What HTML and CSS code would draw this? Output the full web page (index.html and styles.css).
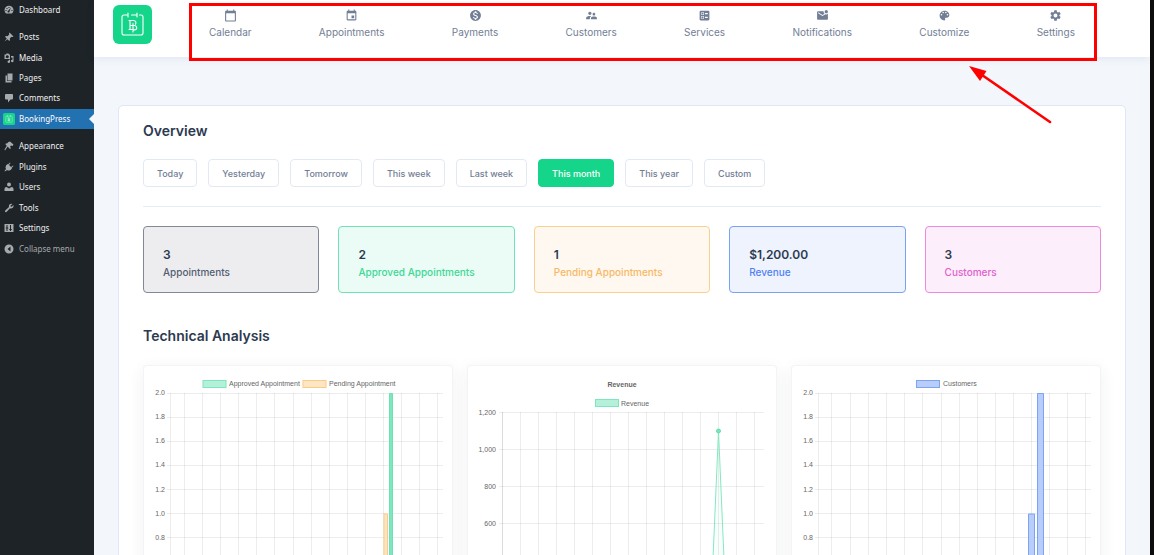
FILE: index.html
```html
<!DOCTYPE html>
<html lang="en">
<head>
<meta charset="utf-8">
<title>BookingPress Dashboard</title>
<link rel="stylesheet" href="styles.css">
</head>
<body>
<svg class="defs" aria-hidden="true">
  <symbol id="mark" viewBox="0 0 39 39">
    <rect width="39" height="39" rx="6" fill="#15d58a"/>
    <g fill="none" stroke="#fff" stroke-width="1.100" stroke-linecap="round" stroke-linejoin="round">
      <path d="M14 10H11q-2 0-2 2v16q0 2 2 2h17q2 0 2-2V12q0-2-2-2h-1.500M15 8v4M18.500 10H24M24 8v4"/>
      <path d="M16 15.500h4.500a2.400 2.400 0 0 1 2 3.800M17 15.500v9M16 24.500h3M17 20.500h4.500a2.200 2.200 0 1 1 0 4.400H20M20 18.500v8.500"/>
    </g>
  </symbol>
</svg>
<div class="app">
  <aside class="sidebar">
    <ul class="menu menu-top">
      <li><a class="menu-link" href="#"><svg class="menu-icon" viewBox="0 0 20 20"><path fill-rule="evenodd" d="M4 17a9 9 0 1 1 12 0zM9 4v2h2V4zM5 6v2h2V6zM3 10v2h2v-2zM15 10v2h2v-2zM14 5l-5 6a2 2 0 1 0 2 1.500z"/></svg>Dashboard</a></li>
    </ul>
    <ul class="menu menu-content">
      <li><a class="menu-link" href="#"><svg class="menu-icon" viewBox="0 0 20 20"><path d="M11 1l8 8-2 1-2-.500-3.500 3.500.500 3-1.500 2L7 14.500 1 19l4.500-6L2 9.500 4 8l3 .500L10.500 5 10 3z"/></svg>Posts</a></li>
      <li><a class="menu-link" href="#"><svg class="menu-icon" viewBox="0 0 20 20"><path fill-rule="evenodd" d="M1 3h3l1-2h4l1 2h2v9H1zM6.500 4.500a3 3 0 1 0 .1 0zM14 6h5v10a2.500 2.500 0 1 1-2-2.500V9h-3zM12 13.500V18a2.500 2.500 0 1 1-2-3v-1.500z"/></svg>Media</a></li>
      <li><a class="menu-link" href="#"><svg class="menu-icon" viewBox="0 0 20 20"><path d="M7 1h10v14H7zM3 5h3v11h9v3H3z"/></svg>Pages</a></li>
      <li><a class="menu-link" href="#"><svg class="menu-icon" viewBox="0 0 20 20"><path d="M4 2h12q2 0 2 2v7q0 2-2 2h-3l-5 6v-6H4q-2 0-2-2V4q0-2 2-2z"/></svg>Comments</a></li>
      <li><a class="menu-link menu-link-active" href="#" aria-current="page"><svg class="menu-icon"><use href="#mark"/></svg>BookingPress</a></li>
    </ul>
    <ul class="menu menu-admin">
      <li><a class="menu-link" href="#"><svg class="menu-icon" viewBox="0 0 20 20"><path d="M9 2l3-1 7 6-2 3-3-1-3 4-3-3-6 9-1-2 5-8-1-3z"/><path d="M4 4l10 10-2 2L3 7z"/></svg>Appearance</a></li>
      <li><a class="menu-link" href="#"><svg class="menu-icon" viewBox="0 0 20 20"><path d="M12 1l1 1-3 4 4 4 4-3 1 1-4 4 1 1-3 3q-4 2-7 0l-4 3-1-1 3-4q-2-3 0-7l3-3 1 1z"/></svg>Plugins</a></li>
      <li><a class="menu-link" href="#"><svg class="menu-icon" viewBox="0 0 20 20"><circle cx="10" cy="5" r="4"/><path d="M1 18v-4q0-4 4-4l5 3 5-3q4 0 4 4v4z"/></svg>Users</a></li>
      <li><a class="menu-link" href="#"><svg class="menu-icon" viewBox="0 0 20 20"><path d="M17 2l-4 3 .500 2 2 .500L19 4q1 4-2 6-2 1.500-5 .500L5 18q-2 1-3-1-.500-1 .500-2L10 8Q9 5 11 3q2-2 6-1z"/></svg>Tools</a></li>
      <li><a class="menu-link" href="#"><svg class="menu-icon" viewBox="0 0 20 20"><path fill-rule="evenodd" d="M1 2h18v16H1zM5 4v5H3.500v2H5v5h2v-5h1.500V9H7V4zM12 4v8h-1.500v2H12v2h2v-2h1.500v-2H14V4z"/></svg>Settings</a></li>
      <li><button class="menu-link menu-collapse" type="button"><svg class="menu-icon" viewBox="0 0 20 20"><path fill-rule="evenodd" d="M10 1a9 9 0 1 1 0 18 9 9 0 1 1 0-18zM13 5l-6 5 6 5z"/></svg>Collapse menu</button></li>
    </ul>
  </aside>

  <div class="page">
    <header class="topbar">
      <a class="brand" href="#" aria-label="BookingPress"><svg class="brand-mark"><use href="#mark"/></svg></a>
      <nav class="nav">
        <a class="nav-link" href="#"><svg class="nav-icon" viewBox="0 0 24 24"><path d="M20 3h-1V1h-2v2H7V1H5v2H4c-1.100 0-2 .9-2 2v16c0 1.100.9 2 2 2h16c1.100 0 2-.9 2-2V5c0-1.100-.9-2-2-2zm0 18H4V8h16v13z"/></svg>Calendar</a>
        <a class="nav-link" href="#"><svg class="nav-icon" viewBox="0 0 24 24"><path d="M17 12h-5v5h5v-5zM16 1v2H8V1H6v2H5c-1.110 0-1.990.9-1.990 2L3 19c0 1.100.89 2 2 2h14c1.100 0 2-.9 2-2V5c0-1.100-.9-2-2-2h-1V1h-2zm3 18H5V8h14v11z"/></svg>Appointments</a>
        <a class="nav-link" href="#"><svg class="nav-icon" viewBox="0 0 24 24"><path d="M12 2C6.480 2 2 6.480 2 12s4.480 10 10 10 10-4.480 10-10S17.520 2 12 2zm1.410 16.090V20h-2.670v-1.930c-1.710-.36-3.160-1.460-3.270-3.400h1.960c.1 1.050.82 1.870 2.650 1.870 1.960 0 2.400-.98 2.400-1.590 0-.83-.44-1.610-2.670-2.140-2.480-.6-4.180-1.620-4.180-3.670 0-1.720 1.390-2.840 3.110-3.210V4h2.670v1.950c1.860.45 2.790 1.860 2.850 3.390H14.300c-.05-1.110-.64-1.870-2.220-1.870-1.500 0-2.400.68-2.400 1.640 0 .84.65 1.390 2.670 1.910s4.180 1.390 4.180 3.910c-.01 1.830-1.380 2.830-3.120 3.160z"/></svg>Payments</a>
        <a class="nav-link" href="#"><svg class="nav-icon" viewBox="0 0 24 24"><path d="M16.500 12c1.380 0 2.490-1.120 2.490-2.500S17.880 7 16.500 7C15.120 7 14 8.120 14 9.500s1.120 2.500 2.500 2.500zM9 11c1.660 0 2.990-1.340 2.990-3S10.660 5 9 5C7.340 5 6 6.340 6 8s1.340 3 3 3zm7.500 3c-1.830 0-5.500.92-5.500 2.750V19h11v-2.250c0-1.830-3.670-2.750-5.500-2.750zM9 13c-2.330 0-7 1.170-7 3.500V19h7v-2.250c0-.85.33-2.340 2.370-3.470C10.500 13.100 9.660 13 9 13z"/></svg>Customers</a>
        <a class="nav-link" href="#"><svg class="nav-icon" viewBox="0 0 24 24"><path fill-rule="evenodd" d="M13 9.500h5v-2h-5v2zm0 7h5v-2h-5v2zm6 4.500H5c-1.100 0-2-.9-2-2V5c0-1.100.9-2 2-2h14c1.100 0 2 .9 2 2v14c0 1.100-.9 2-2 2zM6 11h5V6H6v5zm1-4h3v3H7V7zM6 18h5v-5H6v5zm1-4h3v3H7v-3z"/></svg>Services</a>
        <a class="nav-link" href="#"><svg class="nav-icon" viewBox="0 0 24 24"><path d="M22 8.980V18c0 1.100-.9 2-2 2H4c-1.100 0-2-.9-2-2V6c0-1.100.9-2 2-2h10.100c-.06.32-.1.66-.1 1 0 1.480.65 2.790 1.670 3.710L12 11 4 6v2l8 5 5.300-3.320c.54.2 1.100.32 1.700.32 1.130 0 2.160-.39 3-1.020zM16 5c0 1.660 1.340 3 3 3s3-1.340 3-3-1.340-3-3-3-3 1.340-3 3z"/></svg>Notifications</a>
        <a class="nav-link" href="#"><svg class="nav-icon" viewBox="0 0 24 24"><path d="M12 3c-4.970 0-9 4.030-9 9s4.030 9 9 9c.83 0 1.500-.67 1.500-1.500 0-.39-.15-.74-.39-1.010-.23-.26-.38-.61-.38-.99 0-.83.67-1.500 1.500-1.500H16c2.760 0 5-2.240 5-5 0-4.420-4.030-8-9-8zm-5.500 9c-.83 0-1.500-.67-1.500-1.500S5.670 9 6.500 9 8 9.670 8 10.500 7.330 12 6.500 12zm3-4C8.670 8 8 7.330 8 6.500S8.670 5 9.500 5s1.500.67 1.500 1.500S10.330 8 9.500 8zm5 0c-.83 0-1.500-.67-1.500-1.500S13.670 5 14.500 5s1.500.67 1.500 1.500S15.330 8 14.500 8zm3 4c-.83 0-1.500-.67-1.500-1.500S16.670 9 17.500 9s1.500.67 1.500 1.500-.67 1.500-1.500 1.500z"/></svg>Customize</a>
        <a class="nav-link" href="#"><svg class="nav-icon" viewBox="0 0 24 24"><path d="M19.140 12.940c.04-.3.060-.61.060-.94 0-.32-.02-.64-.07-.94l2.030-1.580c.18-.14.23-.41.12-.61l-1.920-3.320c-.12-.22-.37-.29-.59-.22l-2.390.96c-.5-.38-1.030-.7-1.620-.94l-.36-2.540c-.04-.24-.24-.41-.48-.41h-3.840c-.24 0-.43.17-.47.41l-.36 2.540c-.59.24-1.130.57-1.620.94l-2.390-.96c-.22-.08-.47 0-.59.22L2.740 8.870c-.12.21-.08.47.12.61l2.030 1.580c-.05.3-.09.63-.09.94s.02.64.07.94l-2.030 1.580c-.18.14-.23.41-.12.61l1.920 3.320c.12.22.37.29.59.22l2.390-.96c.5.38 1.030.7 1.620.94l.36 2.540c.05.24.24.41.48.41h3.840c.24 0 .44-.17.47-.41l.36-2.540c.59-.24 1.130-.56 1.620-.94l2.390.96c.22.08.47 0 .59-.22l1.920-3.320c.12-.22.07-.47-.12-.61l-2.010-1.580zM12 15.600c-1.980 0-3.600-1.620-3.600-3.600s1.620-3.600 3.600-3.600 3.600 1.620 3.600 3.600-1.620 3.600-3.600 3.600z"/></svg>Settings</a>
        <svg class="arrow" viewBox="0 0 84 60" aria-hidden="true"><path d="M14 10L82 57" stroke="#f00" stroke-width="2.600" stroke-linecap="round"/><path d="M1 1l17.500 5-6.500 10z" fill="#f00"/></svg>
      </nav>
    </header>

    <main class="panel">
      <h2 class="title">Overview</h2>
      <div class="filters">
        <button class="filter" type="button">Today</button>
        <button class="filter" type="button">Yesterday</button>
        <button class="filter" type="button">Tomorrow</button>
        <button class="filter" type="button">This week</button>
        <button class="filter" type="button">Last week</button>
        <button class="filter filter-active" type="button" aria-pressed="true">This month</button>
        <button class="filter" type="button">This year</button>
        <button class="filter" type="button">Custom</button>
      </div>
      <section class="stats">
        <div class="stat stat-all"><strong class="stat-value">3</strong><span class="stat-label">Appointments</span></div>
        <div class="stat stat-approved"><strong class="stat-value">2</strong><span class="stat-label">Approved Appointments</span></div>
        <div class="stat stat-pending"><strong class="stat-value">1</strong><span class="stat-label">Pending Appointments</span></div>
        <div class="stat stat-revenue"><strong class="stat-value">$1,200.00</strong><span class="stat-label">Revenue</span></div>
        <div class="stat stat-customers"><strong class="stat-value">3</strong><span class="stat-label">Customers</span></div>
      </section>
      <h2 class="title">Technical Analysis</h2>
      <section class="charts">
        <div class="chart-card">
          <svg class="chart" viewBox="0 0 310 240" role="img" aria-label="Appointments chart">
            <rect class="green" x="60" y="15.500" width="23" height="7"/><text x="86" y="21">Approved Appointment</text>
            <rect class="orange" x="160" y="15.500" width="23" height="7"/><text x="186" y="21">Pending Appointment</text>
            <path class="grid" d="M24 28.500H300M24 52.500H300M24 76.500H300M24 100.500H300M24 124.500H300M24 148.500H300M24 172.500H300M24 197.500H300M24 221.500H300"/>
            <path class="grid" d="M27.500 28V240M41.500 28V240M59.500 28V240M77.500 28V240M95.500 28V240M113.500 28V240M131.500 28V240M150.500 28V240M168.500 28V240M186.500 28V240M204.500 28V240M222.500 28V240M240.500 28V240M258.500 28V240M276.500 28V240M294.500 28V240"/>
            <g class="scale"><text x="22" y="30">2.0</text><text x="22" y="54">1.8</text><text x="22" y="78">1.6</text><text x="22" y="102">1.4</text><text x="22" y="127">1.2</text><text x="22" y="151">1.0</text><text x="22" y="175">0.8</text></g>
            <path class="orange" d="M241 240V149h3.500V240"/>
            <path class="green strong" d="M246.500 240V28.500h3V240"/>
          </svg>
        </div>
        <div class="chart-card">
          <svg class="chart" viewBox="0 0 310 240" role="img" aria-label="Revenue chart">
            <text class="chart-title" x="155" y="22">Revenue</text>
            <rect class="green" x="128.500" y="34.500" width="23" height="7"/><text x="154" y="41">Revenue</text>
            <path class="grid" d="M32 47.500H297M32 84.500H297M32 121.500H297M32 158.500H297M32 195.500H297"/>
            <path class="grid" d="M35.500 47V240M53.500 47V240M71.500 47V240M89.500 47V240M107.500 47V240M125.500 47V240M143.500 47V240M161.500 47V240M179.500 47V240M197.500 47V240M215.500 47V240M233.500 47V240M251.500 47V240M269.500 47V240M287.500 47V240"/>
            <path class="grid" d="M35.500 47V240"/>
            <g class="scale"><text x="29" y="50">1,200</text><text x="29" y="87">1,000</text><text x="29" y="124">800</text><text x="29" y="161">600</text></g>
            <path class="line" d="M244 240L251.500 66L259 240"/>
            <circle class="dot" cx="251.500" cy="66" r="2"/>
          </svg>
        </div>
        <div class="chart-card">
          <svg class="chart" viewBox="0 0 310 240" role="img" aria-label="Customers chart">
            <rect class="blue" x="125.500" y="15.500" width="23" height="7"/><text x="152" y="21">Customers</text>
            <path class="grid" d="M24 28.500H300M24 52.500H300M24 76.500H300M24 100.500H300M24 124.500H300M24 148.500H300M24 172.500H300M24 197.500H300M24 221.500H300"/>
            <path class="grid" d="M27.500 28V240M40.500 28V240M59.500 28V240M77.500 28V240M95.500 28V240M113.500 28V240M131.500 28V240M150.500 28V240M168.500 28V240M186.500 28V240M204.500 28V240M222.500 28V240M240.500 28V240M258.500 28V240M276.500 28V240M294.500 28V240"/>
            <g class="scale"><text x="22" y="30">2.0</text><text x="22" y="54">1.8</text><text x="22" y="78">1.6</text><text x="22" y="102">1.4</text><text x="22" y="127">1.2</text><text x="22" y="151">1.0</text><text x="22" y="175">0.8</text></g>
            <path class="blue" d="M237.500 240V149h6V240M246.500 240V28.500h6V240"/>
          </svg>
        </div>
      </section>
    </main>
  </div>
</div>
</body>
</html>
```

FILE: styles.css
```css
* { box-sizing: border-box; }

body {
  margin: 0;
  height: 100vh;
  overflow: hidden;
  background: #0d0d0d;
  font-family: Inter, sans-serif;
  color: #2c3a50;
}

a { color: inherit; text-decoration: none; }
button { font: inherit; cursor: pointer; }
.defs { display: none; }

.app {
  display: flex;
  height: 100%;
  overflow: hidden;
  margin-right: 4px;
  background: #f3f7fc;
}

/* Sidebar */
.sidebar {
  flex: 0 0 94px;
  background: #1d2327;
  font: 8px/12px "Noto Sans", sans-serif;
  color: #f0f0f1;
}

.menu {
  display: flex;
  flex-direction: column;
  margin: 0 0 7px;
  padding: 0;
  list-style: none;
}
.menu li { flex: 1; display: flex; }
.menu-top { height: 20px; }
.menu-content { height: 102px; }
.menu-admin { height: 123px; }

.menu-link {
  position: relative;
  flex: 1;
  display: flex;
  align-items: center;
  gap: 4px;
  padding: 0 0 0 3px;
  white-space: nowrap;
}
.menu-icon { width: 12px; height: 12px; padding: 1px; fill: #a7aaad; }
.menu-link-active { background: #2271b1; color: #fff; }
.menu-link-active .menu-icon { padding: 0; }
.menu-link-active::after {
  content: "";
  position: absolute;
  right: 0;
  top: 50%;
  border: 5px solid transparent;
  border-left-width: 0;
  border-right-color: #f3f7fc;
  transform: translateY(-50%);
}
.menu-collapse { border: 0; background: none; color: #a7aaad; }

/* Top bar */
.page { flex: 1; min-width: 0; }

.topbar {
  display: flex;
  align-items: flex-start;
  gap: 37px;
  height: 57px;
  padding: 5px 53px 0 19px;
  background: #fff;
  box-shadow: 0 2px 8px rgba(60, 80, 120, .09);
}
.brand-mark { display: block; width: 39px; height: 39px; }

.nav {
  position: relative;
  flex: 1;
  display: flex;
  justify-content: space-between;
  height: 57px;
  margin-top: -1px;
  padding: 5px 22px 0 20px;
}
.nav::after {
  content: "";
  position: absolute;
  inset: -1px 0 0 0;
  border: 3px solid #f00;
  pointer-events: none;
}
.nav-link {
  display: flex;
  flex-direction: column;
  align-items: center;
  gap: 4px;
  font-size: 10px;
  line-height: 13px;
  color: #727e95;
}
.nav-icon { width: 13px; height: 13px; fill: currentColor; }
.arrow {
  position: absolute;
  top: 61px;
  right: 45px;
  width: 84px;
  height: 60px;
}

/* Panel */
.panel {
  margin: 48px 24px 0;
  padding: 16px 24px;
  border: 1px solid #dfe6f5;
  border-radius: 5px;
  background: #fff;
}
.title {
  margin: 0;
  font-size: 14px;
  font-weight: 600;
  line-height: 18px;
}

.filters {
  display: flex;
  gap: 11px;
  margin-top: 19px;
  padding-bottom: 19px;
  border-bottom: 1px solid #e6edf2;
}
.filter {
  height: 28px;
  padding: 0 13px;
  border: 1px solid #e3e9f3;
  border-radius: 4px;
  background: #fff;
  font-size: 9px;
  font-weight: 500;
  color: #727e95;
}
.filter-active { border-color: #15d58a; background: #15d58a; color: #fff; }

.stats {
  display: grid;
  grid-template-columns: repeat(5, 1fr);
  gap: 19px;
  margin: 19px 0 34px;
}
.stat {
  display: flex;
  flex-direction: column;
  padding: 19px 0 11px 19px;
  border: 1px solid;
  border-radius: 4px;
  white-space: nowrap;
}
.stat-value { font-size: 12px; font-weight: 600; line-height: 17px; color: #2c3a50; }
.stat-label { font-size: 10px; font-weight: 500; line-height: 18px; }
.stat-all { border-color: #818897; background: #ededef; color: #535d71; }
.stat-approved { border-color: #6fe3b5; background: #eafcf5; color: #41d795; }
.stat-pending { border-color: #f9d18f; background: #fef8f0; color: #f8b866; }
.stat-revenue { border-color: #79a2f5; background: #eef3fe; color: #5082f5; }
.stat-customers { border-color: #ee8ade; background: #fceefa; color: #e160cd; }

/* Charts */
.charts {
  display: grid;
  grid-template-columns: repeat(3, 1fr);
  gap: 14px;
  margin-top: 20px;
}
.chart-card {
  border-radius: 4px;
  background: #fff;
  box-shadow: inset 0 0 0 1px #f2f4f8, 0 4px 16px rgba(40, 60, 60, .07);
}
.chart { display: block; width: 100%; font: 7px "Liberation Sans", sans-serif; fill: #666; }
.chart-title { font-weight: 700; text-anchor: middle; }
.scale { text-anchor: end; }
.grid { fill: none; stroke: rgba(0, 0, 0, .07); }
.green { fill: #b5f0da; stroke: #7ee5bc; }
.strong { fill: #7de8bf; stroke: #6fe0b3; }
.orange { fill: #fde6c6; stroke: #fbcb85; }
.blue { fill: #b9cdfa; stroke: #7ba3f8; }
.line { fill: rgba(21, 213, 138, .03); stroke: #85e8c2; }
.dot { fill: #7be5bb; stroke: #5fdfad; }
```
